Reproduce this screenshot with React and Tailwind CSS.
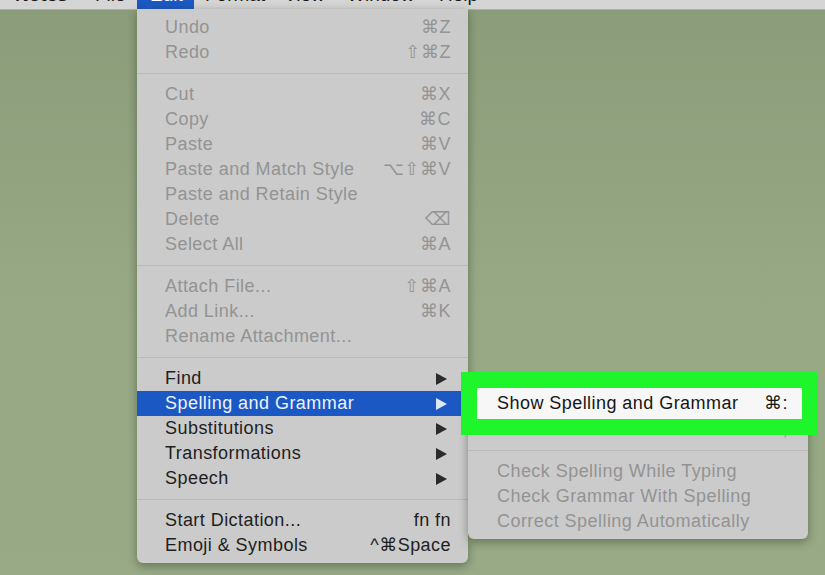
const font = { fontFamily: '"Liberation Sans", "DejaVu Sans", sans-serif' };

const editGroups = [
  [
    { label: "Undo", key: "⌘Z", off: true },
    { label: "Redo", key: "⇧⌘Z", off: true },
  ],
  [
    { label: "Cut", key: "⌘X", off: true },
    { label: "Copy", key: "⌘C", off: true },
    { label: "Paste", key: "⌘V", off: true },
    { label: "Paste and Match Style", key: "⌥⇧⌘V", off: true },
    { label: "Paste and Retain Style", off: true },
    { label: "Delete", key: "⌫", off: true },
    { label: "Select All", key: "⌘A", off: true },
  ],
  [
    { label: "Attach File...", key: "⇧⌘A", off: true },
    { label: "Add Link...", key: "⌘K", off: true },
    { label: "Rename Attachment...", off: true },
  ],
  [
    { label: "Find", sub: true },
    { label: "Spelling and Grammar", sub: true, active: true },
    { label: "Substitutions", sub: true },
    { label: "Transformations", sub: true },
    { label: "Speech", sub: true },
  ],
  [
    { label: "Start Dictation...", key: "fn fn" },
    { label: "Emoji & Symbols", key: "^⌘Space" },
  ],
];

const spellGroups = [
  [
    { label: "Show Spelling and Grammar", key: "⌘:" },
    { label: "Check Document Now", key: "⌘;", off: true },
  ],
  [
    { label: "Check Spelling While Typing", off: true },
    { label: "Check Grammar With Spelling", off: true },
    { label: "Correct Spelling Automatically", off: true },
  ],
];

// submenu arrow
const Arrow = ({ active }) => (
  <svg width="11" height="12" viewBox="0 0 11 12" className="mr-[4px]">
    <path d="M0 0 L11 6 L0 12 Z" fill={active ? "#dfe6f6" : "#2b2b2b"} />
  </svg>
);

const Row = ({ item, pl, pr }) => {
  const color = item.active
    ? "bg-[#1b58c3] text-[#eef2fb]"
    : item.off
    ? "text-[#939393]"
    : "text-[#1e1e1e]";
  return (
    <div className={`flex h-[25px] items-center justify-between text-[18px] tracking-[0.45px] ${pl} ${pr} ${color}`}>
      <span>{item.label}</span>
      {item.key && <span>{item.key}</span>}
      {item.sub && <Arrow active={item.active} />}
    </div>
  );
};

const Menu = ({ groups, pl, pr }) => (
  <div className="pt-[6px] pb-[5px]">
    {groups.map((g, i) => (
      <div key={i}>
        {i > 0 && (
          <div className="flex h-[17px] items-center">
            <div className="h-[2px] w-full border-t border-[#b9b9b9] border-b-[#d3d3d3]" />
          </div>
        )}
        {g.map((item) => (
          <Row key={item.label} item={item} pl={pl} pr={pr} />
        ))}
      </div>
    ))}
  </div>
);

const App = () => {
  const bar = [
    { label: "Notes", w: "w-[95px]", pl: "pl-[15px]", bold: true },
    { label: "File", w: "w-[42px]", pl: "pl-[0px]" },
    { label: "Edit", w: "w-[57px]", pl: "pl-[13px]", active: true },
    { label: "Format", w: "w-[90px]", pl: "pl-[11px]" },
    { label: "View", w: "w-[63px]", pl: "pl-[0px]" },
    { label: "Window", w: "w-[92px]", pl: "pl-[0px]" },
    { label: "Help", w: "w-[60px]", pl: "pl-[0px]" },
  ];

  return (
    <div
      className="relative h-[575px] w-[825px] overflow-hidden bg-gradient-to-b from-[#8a9c79] via-[#96a884] to-[#98aa86]"
      style={font}
    >
      <div className="flex h-[9px] overflow-hidden bg-[#d5d5d5] shadow-[0_1px_0_#a9b39c]">
        {bar.map((b) => (
          <div
            key={b.label}
            className={`h-[9px] ${b.active ? "bg-[#1b58c3] text-white" : "text-[#1a1a1a]"} ${b.w} ${b.pl}`}
          >
            <div className={`-mt-[16px] text-[19px] leading-[22px] ${b.bold ? "font-bold" : ""}`}>{b.label}</div>
          </div>
        ))}
      </div>

      <div className="absolute left-[137px] top-[9px] w-[331px] rounded-b-[6px] bg-[#cbcbcb] shadow-[0_3px_10px_rgba(40,50,30,0.45)]">
        <Menu groups={editGroups} pl="pl-[28px]" pr="pr-[17px]" />
      </div>

      <div className="absolute left-[468px] top-[386px] w-[340px] rounded-[6px] bg-[#cbcbcb] shadow-[0_3px_10px_rgba(40,50,30,0.45)]">
        <Menu groups={spellGroups} pl="pl-[29px]" pr="pr-[20px]" />
      </div>

      <div className="absolute left-[461px] top-[372px] h-[63px] w-[357px] border-[16px] border-[#1ff52b] bg-[#f7f7f7]">
        <div className="flex h-[31px] items-center justify-between pl-[20px] pr-[14px] text-[18px] tracking-[0.45px] text-[#161616]">
          <span>Show Spelling and Grammar</span>
          <span>⌘:</span>
        </div>
      </div>
    </div>
  );
};

export default App;
